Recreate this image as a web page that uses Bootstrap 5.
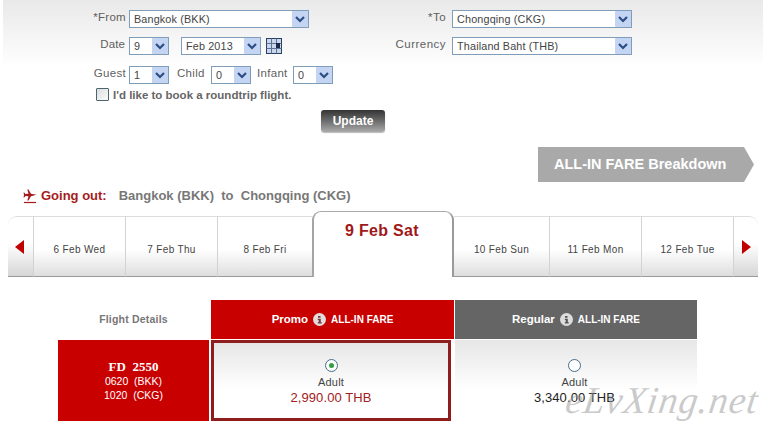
<!DOCTYPE html>
<html lang="en"><head><meta charset="utf-8"><title>Fare selection</title>
<link href="https://cdn.jsdelivr.net/npm/bootstrap@5.3.0/dist/css/bootstrap.min.css" rel="stylesheet">
<style>
html,body{height:435px;overflow:hidden}
body{font-family:"Liberation Sans",Arial,sans-serif;background:#fff;color:#555;width:770px;position:relative}
.search-panel{margin:0 7px 0 3px;height:66px;padding:10px 0 0 90px;background:linear-gradient(#e9e9e9,#fdfdfd 62px,#fff);position:relative}
.form-cols{height:56px}
.col-left{width:295px}
.col-right{width:384px}
.field-row{height:27px;display:flex;align-items:flex-start}
.lbl{font-size:11.5px;letter-spacing:.3px;color:#5f5f5f;line-height:13px;margin-top:1px;white-space:nowrap}
.lbl-w{width:36px;text-align:right;padding-right:3px;flex:none}
.lbl-date{width:32px;text-align:right;margin-right:4px;letter-spacing:.1px}
.lbl-r{width:68px;text-align:right;padding-right:6px;flex:none;letter-spacing:.5px}
.lbl-child{width:34px;margin-left:8px}
.lbl-infant{width:36px;margin-left:6px}
select.fsel{appearance:none;-webkit-appearance:none;font:10.8px/15px "Liberation Sans",Arial,sans-serif;letter-spacing:.15px;color:#444;height:18px;padding:0 18px 0 4px;border:1px solid #7f9db9;border-radius:0;background:#fff url("data:image/svg+xml,%3Csvg xmlns='http://www.w3.org/2000/svg' width='16' height='16'%3E%3Crect width='16' height='16' rx='1' fill='%23c3d5f2'/%3E%3Cpath d='M4 6l4 4 4-4' fill='none' stroke='%232d4c86' stroke-width='2.2'/%3E%3C/svg%3E") no-repeat right 0 center;display:block}
.w180{width:180px}.w40{width:40px}.w80{width:80px;margin-left:12px}
.cal{margin:1px 0 0 5px;display:block}
.guest-row{position:absolute;left:90px;top:66px;display:flex;align-items:flex-start}
.round-row{position:absolute;left:93px;top:88px;display:flex;align-items:center;gap:4px;font-size:11.5px;font-weight:700;color:#666;line-height:12px;white-space:nowrap}
.chk{width:13px;height:13px;border:1px solid #4d6570;border-radius:1px;background:linear-gradient(135deg,#ddd,#fbfbfb);flex:none}
.update-wrap{height:66px;padding:44px 0 0 321px}
.update-btn{display:block;width:64px;height:22px;padding:0;border:0;border-radius:3px;background:linear-gradient(#333,#666 45%,#aaa);box-shadow:0 1px 1px #bbb;color:#fff;font-size:12px;font-weight:700;line-height:22px;text-align:center}
.breakdown-wrap{height:35px;margin-top:15px;padding-left:538px}
.breakdown{width:216px;height:35px;background:#a9a9a9;clip-path:polygon(0 0,206px 0,216px 50%,206px 100%,0 100%);color:#fff;font-size:14.5px;font-weight:700;line-height:35px;padding-left:16px;white-space:nowrap}
.going{height:16px;margin-top:6px;padding-left:23px;display:flex;align-items:center;font-size:13px;font-weight:700;line-height:16px;color:#777;white-space:nowrap}
.going b{color:#a61c1c;margin:0 12px 0 4px}
.tabs{margin:7px 0 0 8px;width:750px;height:66px;display:flex;align-items:flex-end}
.tabx{height:61px;background:linear-gradient(#fff 55%,#dedede);border-top:1px solid #ddd;border-bottom:1px solid #9a9a9a;border-left:1px solid #d2d2d2;font-size:10px;letter-spacing:.35px;color:#444;display:flex;align-items:center;justify-content:center;padding-top:6px;flex:none}
.tw{width:92px}.tw95{width:95px}
.tab-after{border-left:0}
.arrow-l{width:25px;border-left:0;border-radius:9px 0 0 0;background:linear-gradient(#fff 45%,#d6d6d6);padding:0}
.arrow-r{width:25px;border-radius:0 9px 0 0;background:linear-gradient(#fff 45%,#d6d6d6);padding:0}
.tri-l,.tri-r{width:0;height:0;border-top:7px solid transparent;border-bottom:7px solid transparent}
.tri-l{border-right:9px solid #c00000;margin-right:2px}.tri-r{border-left:9px solid #c00000;margin-left:1px}
.tab-active{width:142px;height:66px;flex:none;background:#fff;border:1px solid #aaa;border-bottom:0;border-right:2px solid #9a9a9a;border-left:2px solid #a5a5a5;border-radius:9px 9px 0 0;color:#a01818;font-size:16px;font-weight:700;letter-spacing:.3px;text-align:center;padding:10px 2px 0 0;line-height:18px}
.fare{margin:23px 0 0 58px;display:grid;grid-template-columns:152px 243px 242px;column-gap:1px;row-gap:1px;width:639px;grid-template-rows:39px 81px}
.th-plain{display:flex;align-items:center;justify-content:center;font-size:10.5px;font-weight:700;letter-spacing:.2px;color:#777;margin-right:1px}
.th-fare{display:flex;align-items:center;justify-content:center;color:#fff;font-weight:700;font-size:11.5px;gap:5px}
.th-fare small{font-size:10px;font-weight:700}
.red{background:#c90000}.gray{background:#656565}
.info{width:13px;height:13px;display:block}
.flight{background:#c90000;color:#fff;text-align:center;font-size:10.5px;line-height:14px;padding-top:19px;white-space:pre;margin-right:1px}
.flight b{display:block;font-family:"Liberation Serif",serif;font-size:13px;line-height:15px}
.opt{text-align:center;background:linear-gradient(#e6e6e6,#fff 62%);padding:19px 3px 0 0}
.opt-sel{width:240px;border:3px solid #8f1d1d;padding:16px 0 0}
.radio{width:13px;height:13px;border:1px solid #456e8a;border-radius:50%;margin:0 auto;background:#fff;display:flex;align-items:center;justify-content:center}
.radio i{width:5px;height:5px;border-radius:50%;background:#2ea043;display:block}
.adult{font-size:11px;line-height:13px;color:#444;margin-top:4px;letter-spacing:.2px}
.price{font-size:13px;line-height:17px;letter-spacing:.1px;color:#a12020}
.price-k{color:#222}
.watermark{position:absolute;left:566px;top:378px;font-family:"Liberation Serif",serif;font-style:italic;font-size:38px;line-height:44px;color:rgba(150,150,150,.5);letter-spacing:.9px;white-space:nowrap;transform:skewX(-8deg);pointer-events:none}
</style></head><body>
<div class="search-panel">
  <div class="d-flex form-cols">
    <div class="col-left">
      <div class="field-row"><span class="lbl lbl-w">*From</span><select class="fsel w180"><option>Bangkok (BKK)</option></select></div>
      <div class="field-row"><span class="lbl lbl-date">Date</span><select class="fsel w40"><option>9</option></select><select class="fsel w80"><option>Feb 2013</option></select>
        <svg class="cal" width="16" height="16" viewBox="0 0 16 16"><rect x=".5" y=".5" width="15" height="15" fill="#c9d6ec" stroke="#27405f"/><path d="M.5 5.500h15M.5 10.500h15M5.500.5v15M10.500.5v15" stroke="#5a7396" stroke-width="1"/><rect x="10" y="5" width="4" height="5" fill="#1b2a44"/></svg></div>
    </div>
    <div class="col-right ms-auto">
      <div class="field-row"><span class="lbl lbl-r">*To</span><select class="fsel w180"><option>Chongqing (CKG)</option></select></div>
      <div class="field-row"><span class="lbl lbl-r">Currency</span><select class="fsel w180"><option>Thailand Baht (THB)</option></select></div>
    </div>
  </div>
  <div class="guest-row">
    <span class="lbl lbl-w">Guest</span><select class="fsel w40"><option>1</option></select>
    <span class="lbl lbl-child">Child</span><select class="fsel w40"><option>0</option></select>
    <span class="lbl lbl-infant">Infant</span><select class="fsel w40"><option>0</option></select>
  </div>
  <div class="round-row"><span class="chk"></span><span>I'd like to book a roundtrip flight.</span></div>
</div>
<div class="update-wrap"><button class="update-btn" type="button">Update</button></div>
<div class="breakdown-wrap"><div class="breakdown">ALL-IN FARE Breakdown</div></div>
<div class="going">
  <svg width="14" height="15" viewBox="0 0 14 15"><path d="M1 13.500h12" stroke="#a61c1c" stroke-width="1.200"/><path d="M13.500 5.800 8 4.800 5.500 .5H4.300l1.200 4.300-3 .3L1.200 3.600H.5L1 6 .5 8.400h.7l1.300-1.500 3 .3-1.200 4.300h1.200L8 7.200z" fill="#a61c1c"/></svg>
  <b>Going out:</b><span>Bangkok (BKK)&nbsp; to&nbsp; Chongqing (CKG)</span>
</div>
<div class="tabs">
  <div class="tabx arrow-l"><span class="tri-l"></span></div>
  <div class="tabx tw">6 Feb Wed</div>
  <div class="tabx tw">7 Feb Thu</div>
  <div class="tabx tw95">8 Feb Fri</div>
  <div class="tab-active">9 Feb Sat</div>
  <div class="tabx tw95 tab-after">10 Feb Sun</div>
  <div class="tabx tw">11 Feb Mon</div>
  <div class="tabx tw">12 Feb Tue</div>
  <div class="tabx arrow-r"><span class="tri-r"></span></div>
</div>
<div class="fare">
  <div class="th-plain">Flight Details</div>
  <div class="th-fare red">Promo <svg class="info" viewBox="0 0 13 13"><circle cx="6.500" cy="6.500" r="6.500" fill="#e3dcdc"/><path d="M5 3h2.500v1.800H5zM4.800 5.800h3v3.500h1V10.500H4.800V9.300h.9V7H4.800z" fill="#7a3a3a"/></svg> <small>ALL-IN FARE</small></div>
  <div class="th-fare gray">Regular <svg class="info" viewBox="0 0 13 13"><circle cx="6.500" cy="6.500" r="6.500" fill="#ddd"/><path d="M5 3h2.500v1.800H5zM4.800 5.800h3v3.500h1V10.500H4.800V9.300h.9V7H4.800z" fill="#555"/></svg> <small>ALL-IN FARE</small></div>
  <div class="flight"><b>FD&nbsp; 2550</b>0620&nbsp; (BKK)
1020&nbsp; (CKG)</div>
  <div class="opt opt-sel"><div class="radio"><i></i></div><div class="adult">Adult</div><div class="price">2,990.00 THB</div></div>
  <div class="opt"><div class="radio"></div><div class="adult">Adult</div><div class="price price-k">3,340.00 THB</div></div>
</div>
<div class="watermark">eLvXing.net</div>
<script src="https://cdn.jsdelivr.net/npm/bootstrap@5.3.0/dist/js/bootstrap.bundle.min.js"></script>
</body></html>
